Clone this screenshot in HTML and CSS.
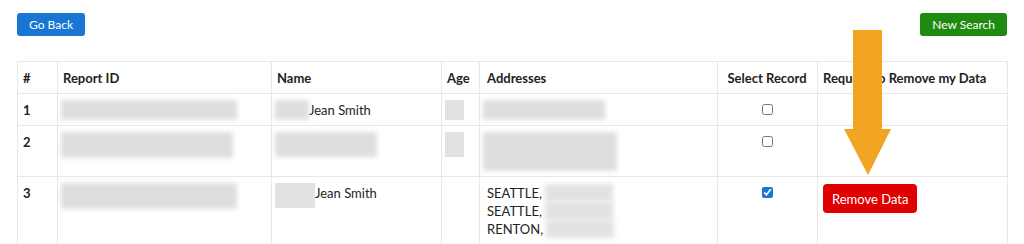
FILE: index.html
```html
<!DOCTYPE html>
<html lang="en">
<head>
    <meta charset="UTF-8">
    <meta name="viewport" content="width=device-width, initial-scale=1.0">
    <title>Search Results</title>
    <link rel="stylesheet" href="styles.css">
</head>
<body>
    <div class="container">
        <div class="toolbar">
            <button class="btn btn-blue">Go Back</button>
            <button class="btn btn-green">New Search</button>
        </div>

        <table class="results">
            <colgroup>
                <col style="width: 40px">
                <col style="width: 214px">
                <col style="width: 170px">
                <col style="width: 38px">
                <col style="width: 238px">
                <col style="width: 100px">
                <col style="width: 190px">
            </colgroup>
            <thead>
                <tr>
                    <th>#</th>
                    <th>Report ID</th>
                    <th>Name</th>
                    <th>Age</th>
                    <th class="addr-cell">Addresses</th>
                    <th class="center">Select Record</th>
                    <th>Request to Remove my Data</th>
                </tr>
            </thead>
            <tbody>
                <tr>
                    <td class="num">1</td>
                    <td><span class="blur" style="width: 176px; height: 20px"></span></td>
                    <td><span class="blur" style="width: 34px; height: 20px"></span>Jean Smith</td>
                    <td><span class="blur sharp" style="width: 19px; height: 20px"></span></td>
                    <td><span class="blur" style="width: 122px; height: 20px"></span></td>
                    <td class="center"><input type="checkbox" class="check"></td>
                    <td></td>
                </tr>
                <tr>
                    <td class="num">2</td>
                    <td><span class="blur" style="width: 172px; height: 26px"></span></td>
                    <td><span class="blur" style="width: 102px; height: 25px"></span></td>
                    <td><span class="blur sharp" style="width: 19px; height: 25px"></span></td>
                    <td><span class="blur" style="width: 134px; height: 39px"></span></td>
                    <td class="center"><input type="checkbox" class="check"></td>
                    <td></td>
                </tr>
                <tr>
                    <td class="num">3</td>
                    <td><span class="blur" style="width: 176px; height: 26px"></span></td>
                    <td><span class="blur sharp" style="width: 40px; height: 25px"></span>Jean Smith</td>
                    <td></td>
                    <td class="addr-cell">
                        <div class="addr">SEATTLE, <span class="blur-line"></span></div>
                        <div class="addr">SEATTLE, <span class="blur-line"></span></div>
                        <div class="addr">RENTON, <span class="blur-line"></span></div>
                    </td>
                    <td class="center"><input type="checkbox" class="check" checked></td>
                    <td><button class="btn btn-red">Remove Data</button></td>
                </tr>
            </tbody>
        </table>
    </div>

    <svg class="arrow" width="50" height="150" viewBox="0 0 50 150">
        <polygon points="9,0 38,0 38,99 47,99 24,145 0,99 9,99" fill="#f2a423"/>
    </svg>
</body>
</html>
```

FILE: styles.css
```css
body {
    margin: 0;
    font-family: Lato, "Open Sans", sans-serif;
    font-size: 13px;
    color: #222;
    background-color: #fff;
    overflow: hidden;
}
.container {
    padding: 13px 17px 0 17px;
}
.toolbar {
    display: flex;
    justify-content: space-between;
    margin-bottom: 25px;
}
.btn {
    font-family: Lato, "Open Sans", sans-serif;
    border: none;
    border-radius: 3px;
    color: #fff;
    cursor: pointer;
    white-space: nowrap;
}
.btn-blue {
    background-color: #1976d2;
    font-size: 12px;
    height: 23px;
    padding: 0 12px;
}
.btn-green {
    background-color: #1f8a10;
    font-size: 12px;
    height: 23px;
    padding: 0 12px;
}
.btn-red {
    background-color: #e00000;
    font-size: 13px;
    height: 29px;
    padding: 0 9px;
    border-radius: 4px;
}
.results {
    width: 990px;
    border-collapse: collapse;
    table-layout: fixed;
}
.results th,
.results td {
    border: 1px solid #e8e8e8;
    padding: 7px 6px 6px 5px;
    line-height: 18px;
    text-align: left;
    vertical-align: top;
}
.results th {
    font-weight: bold;
}
.results .center {
    text-align: center;
}
.results .addr-cell {
    padding-left: 7px;
}
.num {
    font-weight: bold;
}
.blur {
    display: inline-block;
    vertical-align: top;
    background-color: #dedede;
    filter: blur(2.5px);
    margin: -1px 0 -1px -2px;
}
.blur.sharp {
    background-color: #e2e2e2;
    filter: blur(0.6px);
}
.addr {
    white-space: nowrap;
}
.blur-line {
    display: inline-block;
    vertical-align: top;
    width: 68px;
    height: 18px;
    background-color: #e2e2e2;
    filter: blur(2.5px);
}
.check {
    width: 11px;
    height: 11px;
    margin: 3px 0 0 0;
    accent-color: #1976d2;
}
.arrow {
    position: absolute;
    left: 844px;
    top: 30px;
}
```
